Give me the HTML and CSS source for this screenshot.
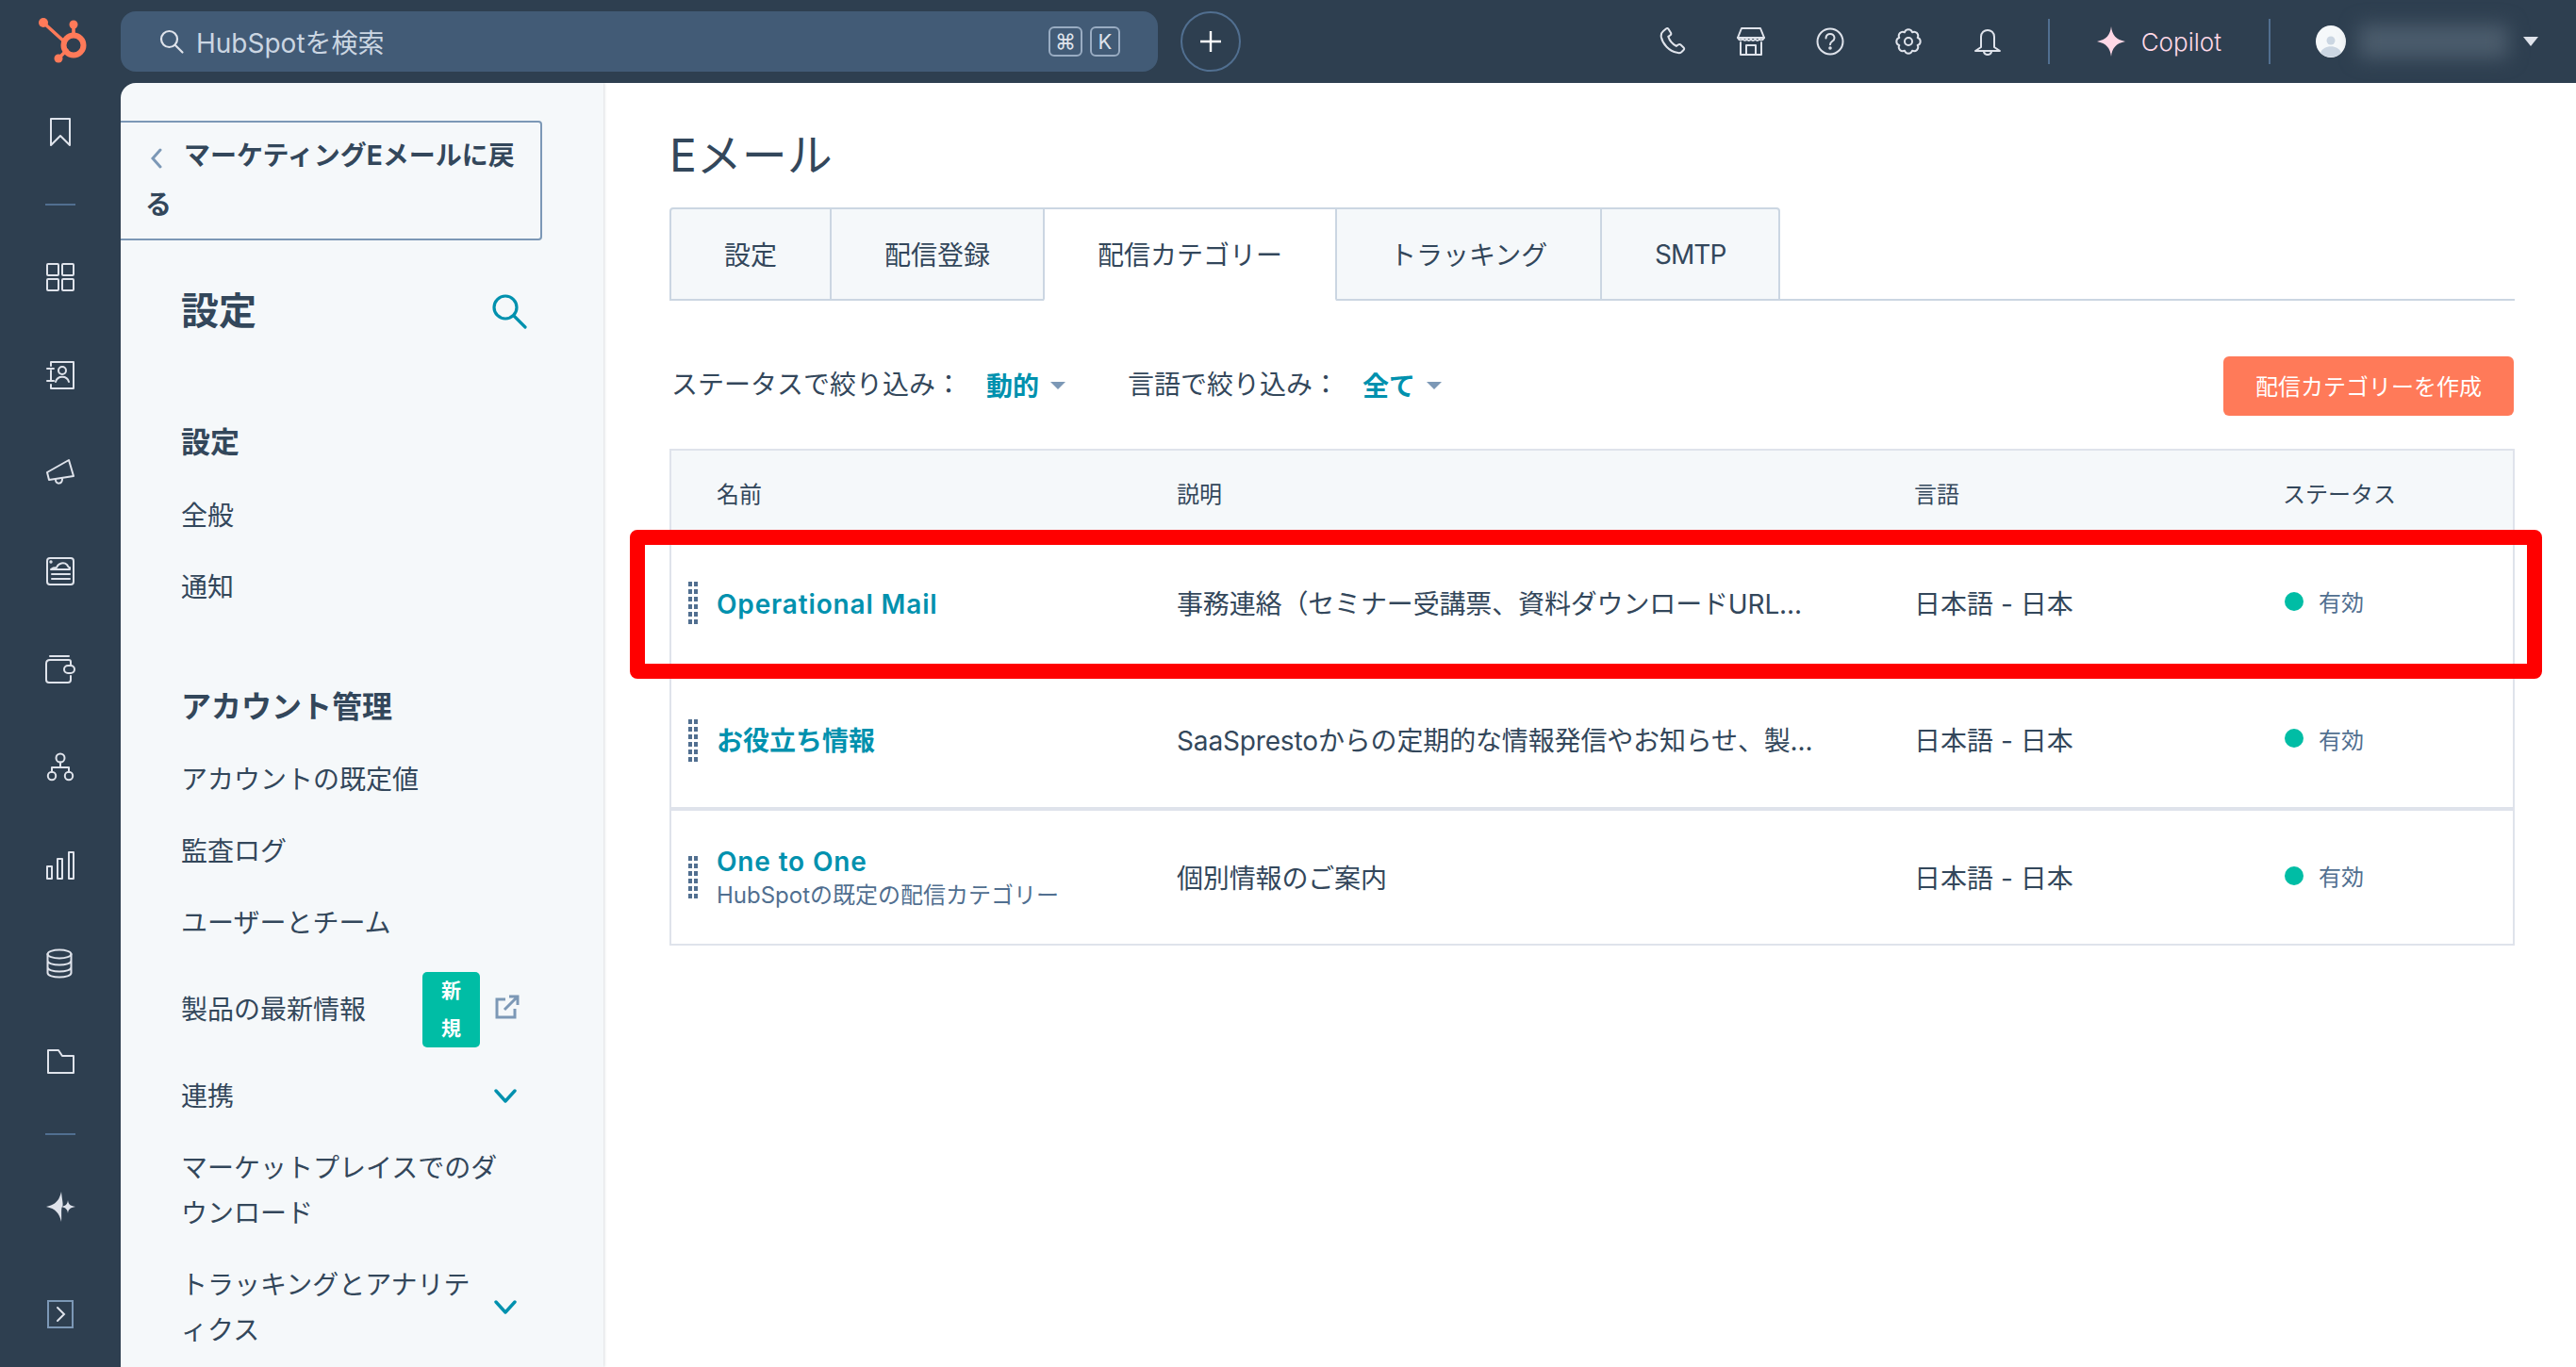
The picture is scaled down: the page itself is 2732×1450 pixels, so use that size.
FILE: index.html
```html
<!DOCTYPE html>
<html lang="ja">
<head>
    <meta charset="utf-8">
    <title>Eメール - 設定</title>
    <link rel="stylesheet" href="styles.css">
</head>
<body>
    <svg class="defs" width="0" height="0">
        <symbol id="grip" viewBox="0 0 10 45">
            <rect x="0" y="0" width="4" height="5"/><rect x="6" y="0" width="4" height="5"/>
            <rect x="0" y="8" width="4" height="5"/><rect x="6" y="8" width="4" height="5"/>
            <rect x="0" y="16" width="4" height="5"/><rect x="6" y="16" width="4" height="5"/>
            <rect x="0" y="24" width="4" height="5"/><rect x="6" y="24" width="4" height="5"/>
            <rect x="0" y="32" width="4" height="5"/><rect x="6" y="32" width="4" height="5"/>
            <rect x="0" y="40" width="4" height="5"/><rect x="6" y="40" width="4" height="5"/>
        </symbol>
        <symbol id="chev" viewBox="0 0 24 16">
            <path d="M2 2l10 11L22 2" fill="none" stroke="#0091ae" stroke-width="3.4" stroke-linecap="round" stroke-linejoin="round"/>
        </symbol>
    </svg>

    <header class="topbar">
        <div class="logo">
            <svg width="64" height="64" viewBox="0 0 64 64" fill="#ff7a59">
                <circle cx="12" cy="12" r="5"/>
                <circle cx="44" cy="14" r="4.5"/>
                <circle cx="28" cy="50" r="4.5"/>
                <path d="M12 12l22 20M44 14v14M28 50l10-10" stroke="#ff7a59" stroke-width="3.6" fill="none"/>
                <circle cx="44" cy="36" r="10.5" fill="none" stroke="#ff7a59" stroke-width="6"/>
            </svg>
        </div>
        <div class="search">
            <svg width="28" height="28" viewBox="0 0 28 28" fill="none" stroke="#dfe3eb" stroke-width="2.2" stroke-linecap="round"><circle cx="11.5" cy="11.5" r="8.5"/><path d="M18 18l7.5 7.5"/></svg>
            <span class="search-text">HubSpotを検索</span>
            <span class="key wide">⌘</span>
            <span class="key">K</span>
        </div>
        <button class="plus">
            <svg width="24" height="24" viewBox="0 0 24 24" stroke="#fff" stroke-width="2.4"><path d="M12 1v22M1 12h22"/></svg>
        </button>
        <div class="top-right">
            <span class="top-icon">
                <svg width="32" height="32" viewBox="0 0 32 32" class="line"><path d="M6 5l3-2.500c1-.8 2-.5 2.600.4l2.400 3.900c.5.9.3 1.800-.5 2.400l-2.200 1.700c1.200 3.600 4.800 8 8.500 10l2.300-1.600c.8-.5 1.700-.5 2.400.2l3.100 3c.8.800.8 1.800 0 2.500l-2.300 2.200c-1.300 1.100-3.100 1.200-4.800.5C12 26.300 5.500 18.800 3.800 11.200 3.400 8.500 4.300 6.400 6 5z"/></svg>
            </span>
            <span class="top-icon">
                <svg width="32" height="32" viewBox="0 0 32 32" class="line"><path d="M6 2h20l4 10c-1.500 3-4.500 3-5 1-.8 2.500-4 2.500-4.500 0-.8 2.500-4.200 2.500-4.500 0-.5 2.500-3.700 2.500-4.500 0-.5 2.500-3.500 2-4.500 0-.8 2-3.500 2-5-1z"/><path d="M2 12h28M5 17v13h22V17M11 30V20h10v10"/></svg>
            </span>
            <span class="top-icon">
                <svg width="32" height="32" viewBox="0 0 32 32" class="line"><circle cx="16" cy="16" r="13.500"/><path d="M11.500 12.500c0-6 9-6 9-.3 0 3.800-4.500 3.300-4.500 7"/><circle cx="16" cy="23" r=".8"/></svg>
            </span>
            <span class="top-icon">
                <svg width="32" height="32" viewBox="0 0 32 32" class="line"><path d="M25.700 11.980A4.200 4.200 0 0 1 25.700 20.020A4.200 4.200 0 0 1 20.020 25.700A4.200 4.200 0 0 1 11.980 25.700A4.200 4.200 0 0 1 6.300 20.020A4.200 4.200 0 0 1 6.300 11.980A4.200 4.200 0 0 1 11.980 6.300A4.200 4.200 0 0 1 20.020 6.300A4.200 4.200 0 0 1 25.700 11.980z"/><circle cx="16" cy="16" r="4"/></svg>
            </span>
            <span class="top-icon">
                <svg width="32" height="32" viewBox="0 0 32 32" class="line"><path d="M9 22V11c0-9.500 14-9.500 14 0v11l6 4H3z"/><path d="M12 27c1 4 7 4 8 0"/></svg>
            </span>
            <span class="top-divider first"></span>
            <span class="copilot">
                <svg width="30" height="32" viewBox="0 0 30 32" fill="#ffd8e6"><path d="M15 0c1 9 5 14 15 16-10 2-14 7-15 16-1-9-5-14-15-16 10-2 14-7 15-16z"/></svg>
                Copilot
            </span>
            <span class="top-divider"></span>
            <span class="avatar">
                <svg width="32" height="34" viewBox="0 0 32 34"><ellipse cx="16" cy="17" rx="16" ry="17" fill="#f5f8fa"/><circle cx="16" cy="16" r="4.500" fill="#cbd6e2"/><path d="M5 29c3-9 19-9 22 0-6 6-16 6-22 0z" fill="#cbd6e2"/></svg>
            </span>
            <span class="blurred"></span>
            <span class="caret-light"></span>
        </div>
    </header>

    <div class="page">
        <nav class="rail">
            <span class="rail-icon"><svg width="32" height="32" viewBox="0 0 32 32" class="line"><path d="M6 2h20v28l-10-10-10 10z"/></svg></span>
            <span class="rail-divider"></span>
            <span class="rail-icon"><svg width="32" height="32" viewBox="0 0 32 32" class="line"><rect x="2" y="2" width="12" height="12" rx="1"/><rect x="18" y="2" width="12" height="12" rx="1"/><rect x="2" y="18" width="12" height="12" rx="1"/><rect x="18" y="18" width="12" height="12" rx="1"/></svg></span>
            <span class="rail-icon"><svg width="32" height="32" viewBox="0 0 32 32" class="line"><path d="M6 6V2h24v28H6v-4M6 11v10M2 9h7M2 22h7"/><circle cx="18" cy="11" r="4"/><path d="M11 23c2-7 12-7 14 0"/></svg></span>
            <span class="rail-icon"><svg width="32" height="32" viewBox="0 0 32 32" class="line"><path d="M2 15l23-13 5 17-26 4z"/><path d="M11 23c0 5 7 5 7-1"/></svg></span>
            <span class="rail-icon"><svg width="32" height="32" viewBox="0 0 32 32" class="line"><rect x="2" y="2" width="28" height="28" rx="3"/><path d="M6 14c2-2 4-2 6-2 2-5 8-6 11-3 1 1 1 3 3 3v2zM7 19h19M7 24h19"/><circle cx="6" cy="6" r=".7"/></svg></span>
            <span class="rail-icon"><svg width="32" height="32" viewBox="0 0 32 32" class="line"><path d="M5 2h20M27 11V8c0-1-1-2-2-2H5C3 6 1 7 1 10v17c0 2 1 3 3 3h20c2 0 3-1 3-3v-4"/><rect x="20" y="12" width="11" height="8" rx="4"/></svg></span>
            <span class="rail-icon"><svg width="32" height="32" viewBox="0 0 32 32" class="line"><circle cx="16" cy="6" r="4.500"/><circle cx="7" cy="25" r="4.200"/><circle cx="25" cy="25" r="4.200"/><path d="M16 10.500V16M7 21v-5h18v5"/></svg></span>
            <span class="rail-icon"><svg width="32" height="32" viewBox="0 0 32 32" class="line"><rect x="2" y="17" width="5" height="13"/><rect x="13" y="9" width="5" height="21"/><rect x="25" y="2" width="5" height="28"/></svg></span>
            <span class="rail-icon"><svg width="32" height="32" viewBox="0 0 32 32" class="line"><ellipse cx="15" cy="6" rx="12.500" ry="4.500"/><path d="M2.500 6v20c0 6 25 6 25 0V6M2.500 13c0 6 25 6 25 0M2.500 20c0 6 25 6 25 0"/></svg></span>
            <span class="rail-icon"><svg width="32" height="32" viewBox="0 0 32 32" class="line"><path d="M3 4h11l4 6h12v18H3z"/></svg></span>
            <span class="rail-divider"></span>
            <span class="rail-icon"><svg width="32" height="32" viewBox="0 0 32 32" fill="#dfe3eb"><path d="M17 0c.8 9 2.500 14 1 16-1.500 1.500-.5 9-1 16-2-9-6-14-16-16 10-2 14-7 16-16z"/><path d="M24 9c.5 4 2 6 8 7-6 1-7.500 3-8 7-.5-4-2-6-7-7 5-1 6.500-3 7-7z"/></svg></span>
            <span class="rail-icon last"><svg width="32" height="32" viewBox="0 0 32 32" fill="none" stroke="#7c98b6" stroke-width="2"><rect x="3" y="2" width="26" height="28"/><path d="M13 9l7 7-7 7" stroke="#dfe3eb" stroke-linecap="round"/></svg></span>
        </nav>

        <aside class="sidebar">
            <a class="back-link"><svg class="back-chev" width="12" height="24" viewBox="0 0 12 24" fill="none" stroke="#7c98b6" stroke-width="3" stroke-linecap="round"><path d="M10 3L2 12l8 9"/></svg>マーケティングEメールに戻る</a>
            <div class="side-inner">
                <div class="side-head">
                    <h2>設定</h2>
                    <svg class="side-search" width="38" height="38" viewBox="0 0 38 38" fill="none" stroke="#0091ae" stroke-width="3.200" stroke-linecap="round"><circle cx="15" cy="15" r="12"/><path d="M24 24l12 12"/></svg>
                </div>
                <h3 class="side-title">設定</h3>
                <a class="side-item">全般</a>
                <a class="side-item">通知</a>
                <h3 class="side-title second">アカウント管理</h3>
                <a class="side-item">アカウントの既定値</a>
                <a class="side-item">監査ログ</a>
                <a class="side-item">ユーザーとチーム</a>
                <a class="side-item with-badge">
                    <span class="grow">製品の最新情報</span>
                    <span class="badge">新規</span>
                    <svg class="ext" width="26" height="26" viewBox="0 0 26 26" fill="none" stroke="#7c98b6" stroke-width="3"><path d="M11 5H2v19h19v-9M10 16L24 2M15 2h9v9"/></svg>
                </a>
                <a class="side-item with-chev"><span class="grow">連携</span><svg class="chev" width="24" height="16"><use href="#chev"/></svg></a>
                <a class="side-item narrow">マーケットプレイスでのダウンロード</a>
                <a class="side-item with-chev"><span class="grow">トラッキングとアナリティクス</span><svg class="chev" width="24" height="16"><use href="#chev"/></svg></a>
            </div>
        </aside>

        <main class="content">
            <h1>Eメール</h1>
            <div class="tabs">
                <a class="tab">設定</a>
                <a class="tab">配信登録</a>
                <a class="tab active">配信カテゴリー</a>
                <a class="tab">トラッキング</a>
                <a class="tab smtp">SMTP</a>
            </div>
            <div class="filters">
                <div class="filter-group">
                    <span class="filter-label">ステータスで絞り込み：</span>
                    <span class="filter-value">動的</span><span class="caret"></span>
                    <span class="filter-label next">言語で絞り込み：</span>
                    <span class="filter-value tight">全て</span><span class="caret"></span>
                </div>
                <button class="create-btn">配信カテゴリーを作成</button>
            </div>
            <div class="table-wrap">
                <div class="table">
                    <div class="row head">
                        <div class="cell name-head">名前</div>
                        <div class="cell">説明</div>
                        <div class="cell">言語</div>
                        <div class="cell">ステータス</div>
                    </div>
                    <div class="row item first-row">
                        <div class="cell name">
                            <svg class="grip" width="10" height="45"><use href="#grip"/></svg>
                            <a class="name-link latin">Operational Mail</a>
                        </div>
                        <div class="cell desc">事務連絡（セミナー受講票、資料ダウンロードURL...</div>
                        <div class="cell lang">日本語 - 日本</div>
                        <div class="cell status"><span class="dot"></span>有効</div>
                    </div>
                    <div class="row item thick">
                        <div class="cell name">
                            <svg class="grip" width="10" height="45"><use href="#grip"/></svg>
                            <a class="name-link">お役立ち情報</a>
                        </div>
                        <div class="cell desc">SaaSprestoからの定期的な情報発信やお知らせ、製...</div>
                        <div class="cell lang">日本語 - 日本</div>
                        <div class="cell status"><span class="dot"></span>有効</div>
                    </div>
                    <div class="row item last-row">
                        <div class="cell name">
                            <svg class="grip" width="10" height="45"><use href="#grip"/></svg>
                            <div class="name-stack">
                                <a class="name-link latin">One to One</a>
                                <span class="name-sub">HubSpotの既定の配信カテゴリー</span>
                            </div>
                        </div>
                        <div class="cell desc">個別情報のご案内</div>
                        <div class="cell lang">日本語 - 日本</div>
                        <div class="cell status"><span class="dot"></span>有効</div>
                    </div>
                </div>
                <div class="highlight"></div>
            </div>
        </main>
    </div>
</body>
</html>
```

FILE: styles.css
```css
* {
    box-sizing: border-box;
}

html, body {
    height: 100%;
}

body {
    margin: 0;
    overflow: hidden;
    display: flex;
    flex-direction: column;
    background-color: #2e3f50;
    color: #33475b;
    font-family: Inter, "Noto Sans CJK JP", sans-serif;
    font-size: 28px;
}

.defs {
    position: absolute;
}

#grip {
    fill: #516f90;
}

.line {
    fill: none;
    stroke: #dfe3eb;
    stroke-width: 2;
    stroke-linejoin: round;
    stroke-linecap: round;
}

/* top bar */
.topbar {
    height: 88px;
    flex: none;
    display: flex;
    align-items: center;
}

.logo {
    width: 128px;
    flex: none;
    display: flex;
    justify-content: center;
}

.logo svg {
    margin: 0 0 0 4px;
}

.search {
    width: 1100px;
    height: 64px;
    padding: 0 40px 0 40px;
    display: flex;
    align-items: center;
    background-color: #425b76;
    border-radius: 16px;
    color: #cbd6e2;
}

.search-text {
    margin-left: 12px;
    flex: 1;
}

.key {
    width: 32px;
    height: 32px;
    margin-left: 8px;
    display: flex;
    align-items: center;
    justify-content: center;
    border: 2px solid #99acc2;
    border-radius: 6px;
    color: #dfe3eb;
    font-size: 22px;
}

.key.wide {
    width: 36px;
}

.plus {
    width: 64px;
    height: 64px;
    margin-left: 24px;
    padding: 0;
    display: flex;
    align-items: center;
    justify-content: center;
    background: none;
    border: 2px solid #516f90;
    border-radius: 50%;
}

.top-right {
    margin-left: auto;
    padding-right: 40px;
    display: flex;
    align-items: center;
}

.top-icon {
    width: 83.500px;
    display: flex;
    justify-content: center;
}

.top-divider {
    width: 2px;
    height: 48px;
    background-color: #516f90;
}

.top-divider.first {
    margin-left: 22px;
}

.copilot {
    padding: 0 50px 0 50px;
    display: flex;
    align-items: center;
    gap: 17px;
    color: #ffd8e6;
    font-size: 26px;
    font-weight: 300;
}

.avatar {
    margin-left: 48px;
    display: flex;
}

.blurred {
    width: 158px;
    height: 36px;
    margin-left: 14px;
    background-color: #4b5c6c;
    filter: blur(10px);
}

.caret-light {
    margin-left: 16px;
    border-top: 10px solid #dfe3eb;
    border-left: 8px solid transparent;
    border-right: 8px solid transparent;
}

/* left icon rail */
.page {
    flex: 1;
    min-height: 0;
    display: flex;
}

.rail {
    width: 128px;
    flex: none;
    padding-bottom: 4px;
    display: flex;
    flex-direction: column;
    align-items: center;
}

.rail-icon {
    height: 104px;
    flex: none;
    display: flex;
    align-items: center;
}

.rail-icon.last {
    margin-top: auto;
}

.rail-divider {
    width: 32px;
    height: 2px;
    margin: 24px 0;
    flex: none;
    background-color: #516f90;
}

/* settings sidebar */
.sidebar {
    width: 512px;
    flex: none;
    padding-top: 40px;
    overflow: hidden;
    background-color: #f5f8fa;
    border-top-left-radius: 16px;
    box-shadow: 1px 0 3px rgba(45, 62, 80, 0.18);
    z-index: 1;
}

.back-link {
    display: block;
    width: 447px;
    height: 127px;
    padding: 9px 20px 0 26px;
    border: 2px solid #7c98b6;
    border-left: none;
    border-radius: 0 4px 4px 0;
    font-weight: 700;
    line-height: 52px;
}

.back-chev {
    margin: 0 23px 0 6px;
    vertical-align: -5px;
}

.side-inner {
    padding: 44px 82px 0 64px;
}

.side-head {
    height: 56px;
    display: flex;
    align-items: center;
    justify-content: space-between;
}

.side-head h2 {
    margin: 0;
    font-size: 40px;
    font-weight: 700;
}

.side-search {
    margin: 6px -1px 0 0;
}

.side-title {
    margin: 92px 0 18px;
    font-size: 31px;
    font-weight: 700;
    line-height: 44px;
}

.side-title.second {
    margin: 67px 0 17px;
    font-size: 32px;
}

.side-item {
    display: block;
    padding: 14px 0;
    line-height: 48px;
}

.side-item.narrow {
    padding-right: 20px;
}

.with-badge, .with-chev {
    display: flex;
    align-items: center;
}

.grow {
    flex: 1;
}

.badge {
    width: 61px;
    height: 80px;
    padding: 0 19px;
    background-color: #00bda5;
    border-radius: 5px;
    color: #fff;
    font-size: 21px;
    font-weight: 700;
    line-height: 40px;
    text-align: center;
}

.ext {
    margin: -6px 7px 0 16px;
}

.chev {
    flex: none;
    margin-right: 10px;
}

/* main */
.content {
    flex: 1;
    min-width: 0;
    padding: 45px 65px 0 70px;
    background-color: #fff;
}

.content h1 {
    margin: 0 0 23px;
    font-size: 48px;
    font-weight: 400;
    line-height: 64px;
}

.tabs {
    height: 99px;
    display: flex;
    border-bottom: 2px solid #cbd6e2;
}

.tab {
    height: 99px;
    padding: 0 56px 2px;
    display: flex;
    align-items: center;
    background-color: #f5f8fa;
    border: 1px solid #cbd6e2;
    border-top-width: 2px;
    border-bottom-width: 2px;
}

.tab:first-child {
    border-top-left-radius: 4px;
    border-left-width: 2px;
}

.tab:last-child {
    border-top-right-radius: 4px;
    border-right-width: 2px;
}

.tab.active {
    background-color: #fff;
    border-bottom-color: #fff;
}

.tab.smtp {
    width: 190px;
    padding: 0;
    justify-content: center;
    letter-spacing: -1px;
}

.filters {
    margin-top: 59px;
    display: flex;
    align-items: center;
    justify-content: space-between;
}

.filter-group {
    padding: 0 0 8px 2px;
    display: flex;
    align-items: center;
}

.filter-label.next {
    margin-left: 66px;
}

.filter-value {
    margin: 4px 0 0 26px;
    color: #0091ae;
    font-weight: 700;
}

.filter-value.tight {
    margin-left: 25px;
}

.caret {
    margin: 6px 0 0 12px;
    border-top: 8px solid #7c98b6;
    border-left: 8px solid transparent;
    border-right: 8px solid transparent;
}

.create-btn {
    width: 308px;
    height: 63px;
    margin-right: 1px;
    padding: 0 0 2px;
    background-color: #ff7a59;
    border: none;
    border-radius: 6px;
    color: #fff;
    font-family: inherit;
    font-size: 24px;
}

.table-wrap {
    position: relative;
    margin-top: 35px;
}

.table {
    border: 2px solid #dfe3eb;
}

.row {
    display: grid;
    grid-template-columns: 536px 782px 391px 1fr;
    align-items: center;
}

.row.head {
    height: 89px;
    background-color: #f5f8fa;
    font-size: 24px;
}

.row.item {
    height: 146px;
    border-bottom: 2px solid #dfe3eb;
}

.row.first-row {
    height: 147px;
}

.row.thick {
    border-bottom-width: 4px;
}

.row.last-row {
    height: 141px;
    border-bottom: none;
}

.name-head {
    padding-left: 48px;
}

.name {
    padding-left: 18px;
    display: flex;
    align-items: center;
    gap: 20px;
}

.name-link {
    margin-top: 2px;
    color: #0091ae;
    font-weight: 600;
}

.name-link.latin {
    letter-spacing: 0.85px;
}

.name-stack {
    display: flex;
    flex-direction: column;
}

.name-link, .name-sub {
    line-height: 36px;
}

.name-sub {
    color: #516f90;
    font-size: 24px;
}

.desc {
    padding-bottom: 2px;
    letter-spacing: -0.15px;
}

.lang {
    padding-bottom: 2px;
}

.status {
    padding: 0 0 4px 2px;
    display: flex;
    align-items: center;
    gap: 16px;
    color: #516f90;
    font-size: 24px;
}

.dot {
    width: 20px;
    height: 20px;
    background-color: #00bda5;
    border-radius: 50%;
}

/* red annotation over the first row */
.highlight {
    position: absolute;
    left: -42px;
    right: -29px;
    top: 86px;
    height: 158px;
    border: 16px solid #ff0000;
    border-radius: 8px;
}
```
